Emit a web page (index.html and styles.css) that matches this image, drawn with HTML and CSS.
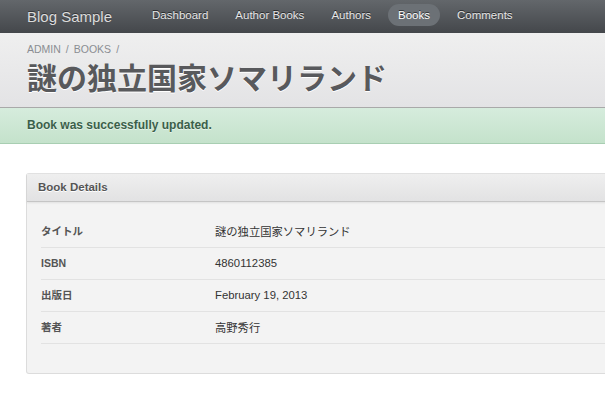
FILE: index.html
```html
<!DOCTYPE html>
<html lang="ja">
<head>
<meta charset="utf-8">
<title>Blog Sample</title>
<link rel="stylesheet" href="styles.css">
</head>
<body>
<header class="navbar">
  <a class="brand" href="#">Blog Sample</a>
  <nav class="nav">
    <a href="#">Dashboard</a>
    <a href="#">Author Books</a>
    <a href="#">Authors</a>
    <a class="active" href="#">Books</a>
    <a href="#">Comments</a>
  </nav>
</header>
<div class="page-header">
  <div class="breadcrumb"><span>ADMIN</span><span class="sep">/</span><span>BOOKS</span><span class="sep">/</span></div>
  <h1 class="title">謎の独立国家ソマリランド</h1>
</div>
<div class="alert">Book was successfully updated.</div>
<main class="content">
  <section class="panel">
    <div class="panel-head">Book Details</div>
    <div class="panel-body">
      <div class="row"><div class="label">タイトル</div><div class="value">謎の独立国家ソマリランド</div></div>
      <div class="row"><div class="label">ISBN</div><div class="value">4860112385</div></div>
      <div class="row"><div class="label">出版日</div><div class="value">February 19, 2013</div></div>
      <div class="row"><div class="label">著者</div><div class="value">高野秀行</div></div>
    </div>
  </section>
</main>
</body>
</html>
```
FILE: styles.css
```css
html, body {
  margin: 0;
  padding: 0;
  overflow-x: hidden;
  background: #fff;
  font-family: "Liberation Sans", "Noto Sans CJK JP", sans-serif;
}

a { text-decoration: none; }

.navbar {
  display: flex;
  align-items: center;
  height: 29px;
  padding: 4px 0 0 27px;
  background: linear-gradient(#63676b, #44474b);
}

.brand {
  font-size: 15px;
  line-height: 22px;
  color: #dcdcdc;
  margin-top: -4px;
  margin-right: 30px;
  text-shadow: 0 -1px 0 rgba(0,0,0,0.4);
}

.nav {
  display: flex;
  gap: 7px;
  align-self: flex-start;
}

.nav a {
  font-size: 11.5px;
  line-height: 14px;
  padding: 4px 10px;
  border-radius: 11px;
  color: #e6e6e6;
  text-shadow: 0 -1px 0 rgba(0,0,0,0.6);
}

.nav a.active {
  background: #6c7176;
  color: #fff;
}

.page-header {
  padding: 9px 27px 10px;
  background: linear-gradient(#efefef, #e3e3e5);
  border-bottom: 1px solid #a9a9a9;
}

.breadcrumb {
  font-size: 10.5px;
  line-height: 14px;
  color: #8a8d92;
  display: flex;
  gap: 5px;
}

.title {
  margin: 5px 0 0;
  font-size: 30px;
  line-height: 36px;
  font-weight: bold;
  color: #58595c;
  text-shadow: 0 1px 0 #fff;
}

.alert {
  height: 35px;
  line-height: 35px;
  padding: 0 27px;
  font-size: 12px;
  font-weight: bold;
  color: #3b5f4a;
  background: linear-gradient(#d6ecdd, #c4e2cb);
  border-bottom: 1px solid #a8ceb2;
  text-shadow: 0 1px 0 rgba(255,255,255,0.5);
}

.content {
  padding: 29px 0 0 26px;
  overflow: hidden;
}

.panel {
  width: 940px;
  background: #f3f3f3;
  border: 1px solid #dcdcdc;
  border-top-color: #e2e2e2;
  border-radius: 3px;
}

.panel-head {
  height: 27px;
  line-height: 27px;
  padding-left: 11px;
  font-size: 11.5px;
  font-weight: bold;
  color: #555;
  background: linear-gradient(#efefef, #e2e2e3);
  border-bottom: 1px solid #c5c5c5;
  box-shadow: 0 1px 2px rgba(0,0,0,0.08);
  text-shadow: 0 1px 0 #fff;
}

.panel-body {
  padding: 14px 0 29px 14px;
}

.row {
  display: grid;
  grid-template-columns: 174px 1fr;
  height: 29px;
  padding-bottom: 2px;
  align-items: center;
  border-bottom: 1px solid #e2e2e2;
}

.label {
  font-size: 10.5px;
  font-weight: bold;
  color: #555;
}

.value {
  font-size: 11.3px;
  color: #333;
}
```
